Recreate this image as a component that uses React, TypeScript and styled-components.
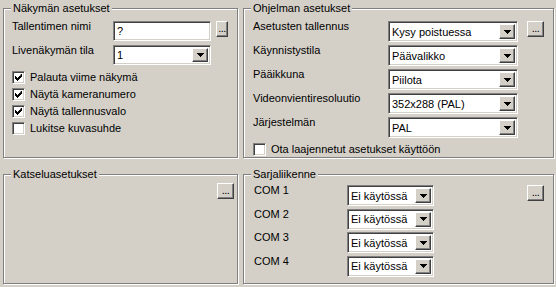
import React from "react";
import styled, { createGlobalStyle } from "styled-components";

const Global = createGlobalStyle`
  body {
    margin: 0;
    background: #d4d0c8;
    font-family: "Liberation Sans", Arial, sans-serif;
    font-size: 11px;
    color: #000;
  }
`;

const Page = styled.div`
  width: 556px;
  height: 287px;
  box-sizing: border-box;
  padding: 8px 2px 0 3px;
  display: grid;
  grid-template-columns: 235px 311px;
  grid-template-rows: 150px 110px;
  column-gap: 5px;
  row-gap: 16px;
`;

const Group = styled.div`
  position: relative;
  border: 1px solid #808080;
  box-shadow: 1px 1px 0 #fff, inset 1px 1px 0 #fff;
  padding: ${(p: { $pad: string }) => p.$pad};
`;

const Legend = styled.span`
  position: absolute;
  top: -7px;
  left: 7px;
  padding: 0 2px;
  background: #d4d0c8;
  line-height: 13px;
`;

const Rows = styled.div`
  display: grid;
  grid-template-columns: ${(p: { $cols: string }) => p.$cols};
  align-items: start;
  row-gap: ${(p: { $cols: string; $gap: number }) => p.$gap}px;
`;

const Label = styled.div`
  line-height: 13px;
  margin-top: -1px;
  white-space: nowrap;
`;

const Sunken = styled.div`
  box-sizing: border-box;
  height: ${(p: { $h: number }) => p.$h}px;
  background: #fff;
  border: 1px solid;
  border-color: #808080 #fff #fff #808080;
  box-shadow: inset 1px 1px 0 #404040, inset -1px -1px 0 #d4d0c8;
  display: flex;
  align-items: center;
  padding: 2px;
  font-size: 11px;
`;

const FieldText = styled.span`
  flex: 1;
  padding-left: 1px;
  white-space: nowrap;
  overflow: hidden;
`;

const Raised = styled.div`
  box-sizing: border-box;
  background: #d4d0c8;
  border: 1px solid;
  border-color: #fff #404040 #404040 #fff;
  box-shadow: inset -1px -1px 0 #808080, inset 1px 1px 0 #d4d0c8;
  display: flex;
  align-items: center;
  justify-content: center;
`;

const ArrowBtn = styled(Raised)`
  width: 16px;
  height: 100%;
`;

const DotsBtn = styled(Raised)`
  width: 17px;
  height: 16px;
  font-size: 11px;
  line-height: 10px;
  padding-bottom: 3px;
  letter-spacing: -0.5px;
`;

const CheckList = styled.div`
  display: flex;
  flex-direction: column;
  gap: 4px;
`;

const CheckRow = styled.label`
  display: flex;
  align-items: center;
  gap: 5px;
  height: 13px;
  line-height: 13px;
`;

const Box = styled.span`
  box-sizing: border-box;
  width: 13px;
  height: 13px;
  background: #fff;
  border: 1px solid;
  border-color: #808080 #fff #fff #808080;
  box-shadow: inset 1px 1px 0 #404040, inset -1px -1px 0 #d4d0c8;
  display: flex;
  align-items: center;
  justify-content: center;
`;

const Arrow = () => (
  <svg width="7" height="4" viewBox="0 0 7 4">
    <path d="M0 0h7v1h-1v1h-1v1h-1v1h-1v-1h-1v-1h-1v-1h-1z" fill="#000" />
  </svg>
);

const Check = () => (
  <svg width="7" height="7" viewBox="0 0 7 7">
    <path
      d="M6 0h1v3h-1v1h-1v1h-1v1h-1v1h-1v-1h-1v-1h-1v-3h1v1h1v1h1v-1h1v-1h1z"
      fill="#000"
    />
  </svg>
);

function Combo({ value, h = 21 }: { value: string; h?: number }) {
  return (
    <Sunken $h={h}>
      <FieldText>{value}</FieldText>
      <ArrowBtn>
        <Arrow />
      </ArrowBtn>
    </Sunken>
  );
}

function CheckBox({ checked, label }: { checked?: boolean; label: string }) {
  return (
    <CheckRow>
      <Box>{checked && <Check />}</Box>
      {label}
    </CheckRow>
  );
}

const Spacer = styled.div``;

const TopRight = styled.div`
  display: flex;
  justify-content: flex-end;
`;

const Stack = styled.div`
  display: flex;
  flex-direction: column;
  gap: ${(p: { $gap: number }) => p.$gap}px;
`;

const programRows: [string, string][] = [
  ["Asetusten tallennus", "Kysy poistuessa"],
  ["Käynnistystila", "Päävalikko"],
  ["Pääikkuna", "Piilota"],
  ["Videonvientiresoluutio", "352x288 (PAL)"],
  ["Järjestelmän", "PAL"],
];

const ports = ["COM 1", "COM 2", "COM 3", "COM 4"];

export default function App() {
  return (
    <>
      <Global />
      <Page>
        <Group $pad="12px 3px 0 8px">
          <Legend>Näkymän asetukset</Legend>
          <Stack $gap={6}>
            <Rows $cols="101px 98px 17px" $gap={4} style={{ columnGap: 0 }}>
              <Label>Tallentimen nimi</Label>
              <Sunken $h={20}>
                <FieldText>?</FieldText>
              </Sunken>
              <TopRight style={{ marginLeft: 5 }}>
                <DotsBtn>...</DotsBtn>
              </TopRight>
              <Label>Livenäkymän tila</Label>
              <Combo value="1" h={20} />
              <Spacer />
            </Rows>
            <CheckList>
              <CheckBox checked label="Palauta viime näkymä" />
              <CheckBox checked label="Näytä kameranumero" />
              <CheckBox checked label="Näytä tallennusvalo" />
              <CheckBox label="Lukitse kuvasuhde" />
            </CheckList>
          </Stack>
        </Group>

        <Group $pad="12px 9px 0 9px">
          <Legend>Ohjelman asetukset</Legend>
          <Stack $gap={5}>
            <Rows $cols="135px 130px 1fr" $gap={3}>
              {programRows.map(([l, v], i) => (
                <React.Fragment key={l}>
                  <Label>{l}</Label>
                  <Combo value={v} />
                  {i === 0 ? (
                    <TopRight>
                      <DotsBtn>...</DotsBtn>
                    </TopRight>
                  ) : (
                    <Spacer />
                  )}
                </React.Fragment>
              ))}
            </Rows>
            <CheckBox label="Ota laajennetut asetukset käyttöön" />
          </Stack>
        </Group>

        <Group $pad="8px 3px 0 8px">
          <Legend>Katseluasetukset</Legend>
          <TopRight>
            <DotsBtn>...</DotsBtn>
          </TopRight>
        </Group>

        <Group $pad="10px 9px 0 10px">
          <Legend>Sarjaliikenne</Legend>
          <Rows $cols="93px 87px 1fr" $gap={2.5}>
            {ports.map((p, i) => (
              <React.Fragment key={p}>
                <Label>{p}</Label>
                <Combo value="Ei käytössä" />
                {i === 0 ? (
                  <TopRight>
                    <DotsBtn>...</DotsBtn>
                  </TopRight>
                ) : (
                  <Spacer />
                )}
              </React.Fragment>
            ))}
          </Rows>
        </Group>
      </Page>
    </>
  );
}
